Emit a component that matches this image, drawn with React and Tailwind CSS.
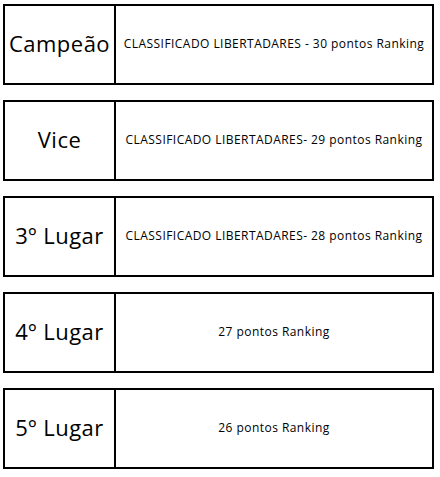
import React from "react";

const rows = [
  { place: "Campeão", info: "CLASSIFICADO LIBERTADARES - 30 pontos Ranking" },
  { place: "Vice", info: "CLASSIFICADO LIBERTADARES- 29 pontos Ranking" },
  { place: "3º Lugar", info: "CLASSIFICADO LIBERTADARES- 28 pontos Ranking" },
  { place: "4º Lugar", info: "27 pontos Ranking" },
  { place: "5º Lugar", info: "26 pontos Ranking" },
];

export default function App() {
  return (
    <div
      className="w-[440px] h-[477px] bg-white pt-[4px] pl-[3px] flex flex-col gap-[15px] text-black"
      style={{ fontFamily: '"Open Sans", "Noto Sans", sans-serif' }}
    >
      {rows.map((row) => (
        <div
          key={row.place}
          className="w-[431px] h-[81px] border-2 border-black flex"
        >
          {/* Place */}
          <div className="w-[111px] shrink-0 border-r-2 border-black flex items-center justify-center text-[22px] tracking-[0.5px] pb-[2px]">
            {row.place}
          </div>
          {/* Info */}
          <div className="flex-1 flex items-center justify-center text-[12px] tracking-[0.45px] whitespace-nowrap pb-[2px]">
            {row.info}
          </div>
        </div>
      ))}
    </div>
  );
}
